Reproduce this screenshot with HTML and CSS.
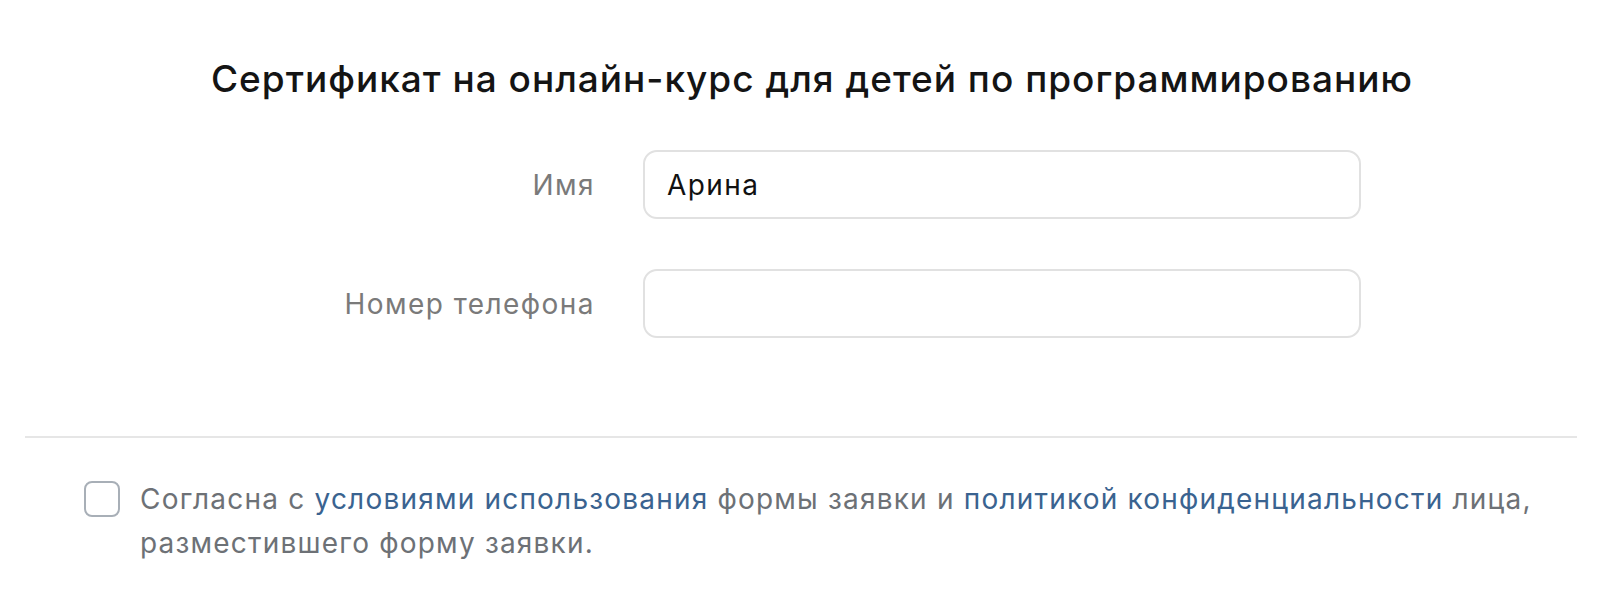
FILE: index.html
```html
<!DOCTYPE html>
<html lang="ru">
<head>
<meta charset="utf-8">
<link rel="stylesheet" href="styles.css">
</head>
<body>
<div class="page">
  <h1 class="title">Сертификат на онлайн-курс для детей по программированию</h1>
  <div class="form">
    <div class="row">
      <label class="label">Имя</label>
      <div class="input">Арина</div>
    </div>
    <div class="row">
      <label class="label">Номер телефона</label>
      <div class="input"></div>
    </div>
  </div>
  <hr class="divider">
  <div class="consent">
    <span class="checkbox"></span>
    <p class="consent-text">Согласна с <a class="link">условиями использования</a> формы заявки и <a class="link">политикой конфиденциальности</a> лица, разместившего форму заявки.</p>
  </div>
</div>
</body>
</html>
```
FILE: styles.css
```css
html, body {
  margin: 0;
  background: #ffffff;
}
body {
  font-family: Inter, Roboto, "Noto Sans", Arial, sans-serif;
  width: 1600px;
  height: 611px;
  overflow: hidden;
}
.page {
  padding: 57px 23px 0 25px;
}
.title {
  margin: 0;
  padding-left: 22px;
  text-align: center;
  font-size: 37px;
  letter-spacing: 1px;
  font-weight: 500;
  color: #141414;
  line-height: 44px;
}
.form {
  margin-top: 49px;
  display: flex;
  flex-direction: column;
  gap: 50px;
}
.row {
  display: grid;
  grid-template-columns: 569px 718px;
  column-gap: 49px;
  align-items: center;
}
.label {
  text-align: right;
  font-size: 28px;
  letter-spacing: 1.45px;
  color: #7a7a7a;
  margin-right: -1px;
}
.input {
  box-sizing: border-box;
  height: 69px;
  border: 2px solid #e1e1e1;
  border-radius: 14px;
  padding: 0 22px;
  display: flex;
  align-items: center;
  font-size: 28px;
  letter-spacing: 1.4px;
  color: #111;
}
.divider {
  margin: 98px 0 0 0;
  border: 0;
  border-top: 2px solid #e6e6e6;
}
.consent {
  margin-top: 42px;
  padding-left: 59px;
  display: flex;
  align-items: flex-start;
  gap: 20px;
}
.checkbox {
  flex: none;
  box-sizing: border-box;
  width: 36px;
  height: 36px;
  border: 2px solid #a8afb7;
  border-radius: 8px;
  margin-top: 1px;
}
.consent-text {
  margin: 0;
  font-size: 28px;
  letter-spacing: 1.2px;
  line-height: 44px;
  color: #6d7176;
  margin-top: -3px;
}
.link {
  color: #3a6390;
  text-decoration: none;
}
```
